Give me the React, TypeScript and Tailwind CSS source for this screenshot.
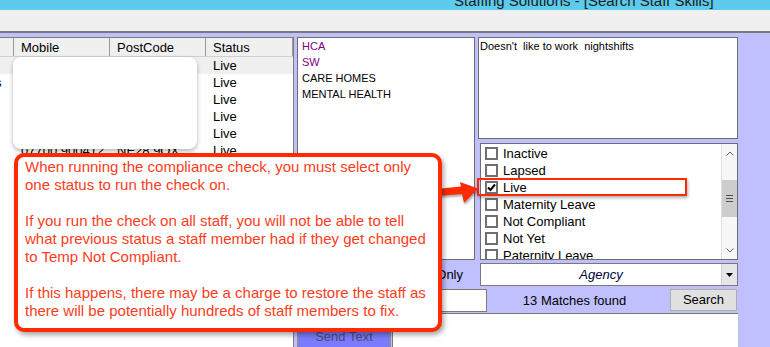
import React from "react";

const rows = [
  { lead: "", mobile: "", post: "", status: "Live" },
  { lead: "s", mobile: "", post: "", status: "Live" },
  { lead: "", mobile: "", post: "", status: "Live" },
  { lead: "", mobile: "", post: "", status: "Live" },
  { lead: "", mobile: "", post: "", status: "Live" },
  { lead: "", mobile: "07700 900412", post: "NE28 9QX", status: "Live" },
];

const skills = [
  { label: "HCA", purple: true },
  { label: "SW", purple: true },
  { label: "CARE HOMES", purple: false },
  { label: "MENTAL HEALTH", purple: false },
];

const statuses = [
  "Inactive",
  "Lapsed",
  "Live",
  "Maternity Leave",
  "Not Compliant",
  "Not Yet",
  "Paternity Leave",
];

function Checkbox({ checked }: { checked: boolean }) {
  return (
    <span className="flex h-[13px] w-[13px] shrink-0 items-center justify-center border-2 border-[#707070] bg-white">
      {checked && (
        <svg viewBox="0 0 9 9" className="h-[9px] w-[9px]">
          <path d="M1 4.5 L3.5 7 L8 1.5" fill="none" stroke="#000" strokeWidth="2" />
        </svg>
      )}
    </span>
  );
}

export default function App() {
  return (
    <div className="relative h-[347px] w-[770px] overflow-hidden bg-[#c0c0ff] font-['Liberation_Sans',Arial,sans-serif] text-[13px] text-black">
      {/* title bar */}
      <div className="h-[10px] overflow-hidden bg-[#5ccbec]">
        <div className="ml-[454px] mt-[-7px] whitespace-nowrap text-[15px] leading-[15px] text-[#1a1a1a]">
          Staffing Solutions - [Search Staff Skills]
        </div>
      </div>
      <div className="h-[21px] bg-[#f0f0f0]" />
      <div className="h-[2px] bg-[#7a7a7a]" />

      <div className="flex h-[314px] pt-[4px]">
        {/* results grid */}
        <div className="w-[294px] shrink-0 border-r border-t border-[#7d7d7d] bg-white">
          <div className="flex h-[19px] border-b border-[#d0d0d0] bg-[#f0f0f0] leading-[19px]">
            <div className="w-[14px] border-r border-[#9a9a9a]" />
            <div className="w-[96px] border-r border-[#9a9a9a] pl-[7px]">Mobile</div>
            <div className="w-[96px] border-r border-[#9a9a9a] pl-[7px]">PostCode</div>
            <div className="flex-1 border-r border-[#9a9a9a] pl-[7px]">Status</div>
          </div>
          {rows.map((r, i) => (
            <div
              key={i}
              className={`flex h-[17px] leading-[17px] ${i === 0 ? "bg-[#f0f0f0]" : ""}`}
            >
              <div className="w-[14px] overflow-hidden">
                <span className="ml-[-5px] block">{r.lead}</span>
              </div>
              <div className="w-[96px] whitespace-nowrap pl-[7px]">{r.mobile}</div>
              <div className="w-[96px] whitespace-nowrap pl-[7px]">{r.post}</div>
              <div className="flex-1 pl-[7px]">{r.status}</div>
            </div>
          ))}
        </div>

        <div className="ml-[3px] flex w-[441px] shrink-0 flex-col">
          <div className="flex h-[223px] gap-[3px]">
            {/* skills */}
            <div className="w-[178px] border border-[#6e6e6e] bg-white pl-[4px] text-[11px] leading-[16px]">
              {skills.map((s) => (
                <div key={s.label} className={s.purple ? "text-[#800080]" : "text-black"}>
                  {s.label}
                </div>
              ))}
            </div>

            <div className="flex w-[260px] flex-col gap-[4px]">
              {/* notes */}
              <div className="h-[102px] whitespace-pre border border-[#6e6e6e] bg-white pl-[1px] text-[11px] leading-[16px]">
                {"Doesn't  like to work  nightshifts"}
              </div>
              {/* status list */}
              <div className="ml-[2px] flex h-[117px] border border-[#6e6e6e] bg-white">
                <div className="flex-1 overflow-hidden pl-[4px] pt-[1px]">
                  {statuses.map((s) => (
                    <div key={s} className="flex h-[17px] items-center gap-[5px] leading-[17px]">
                      <Checkbox checked={s === "Live"} />
                      <span className="whitespace-nowrap">{s}</span>
                    </div>
                  ))}
                </div>
                <div className="flex w-[16px] flex-col border-l border-[#e0e0e0] bg-[#f7f7f7]">
                  <div className="flex h-[18px] items-center justify-center">
                    <svg viewBox="0 0 8 5" className="h-[5px] w-[8px]">
                      <path d="M0.5 4.5 L4 1 L7.5 4.5" fill="none" stroke="#606060" strokeWidth="1" />
                    </svg>
                  </div>
                  <div className="mt-[18px] flex h-[37px] items-center justify-center bg-[#cdcdcd]">
                    <div className="flex w-[7px] flex-col gap-[2px]">
                      <div className="h-px bg-[#505050]" />
                      <div className="h-px bg-[#505050]" />
                      <div className="h-px bg-[#505050]" />
                    </div>
                  </div>
                  <div className="flex-1" />
                  <div className="flex h-[18px] items-center justify-center">
                    <svg viewBox="0 0 8 5" className="h-[5px] w-[8px]">
                      <path d="M0.5 0.5 L4 4 L7.5 0.5" fill="none" stroke="#606060" strokeWidth="1" />
                    </svg>
                  </div>
                </div>
              </div>
            </div>
          </div>

          {/* agency row */}
          <div className="mt-[3px] flex h-[23px]">
            <div className="w-[183px] pr-[17px] text-right leading-[23px]">Agency Only</div>
            <div className="flex w-[258px] border border-[#7a7a7a] bg-white">
              <div className="flex-1 text-center italic leading-[21px] text-[#00003a]">Agency</div>
              <div className="flex w-[16px] items-center justify-center border-l border-[#d0d0d0] bg-[#e6e6e6]">
                <svg viewBox="0 0 7 4" className="h-[4px] w-[7px]">
                  <path d="M0 0 L7 0 L3.5 4 Z" fill="#000" />
                </svg>
              </div>
            </div>
          </div>

          {/* search row */}
          <div className="mt-[3px] flex h-[23px]">
            <div className="ml-[95px] w-[95px] border border-[#7a7a7a] bg-white" />
            <div className="w-[183px] pr-[8px] text-center leading-[23px]">13 Matches found</div>
            <button className="h-[22px] w-[67px] border border-[#adadad] bg-[#e1e1e1] leading-[20px]">
              Search
            </button>
          </div>

          {/* bottom */}
          <div className="mt-[1px] flex flex-1">
            <div className="w-[95px] pl-[0px] pt-[9px]">
              <div className="h-[30px] w-[94px] border-2 border-[#8a8aa8] bg-[#7b7bff] p-[2px]">
                <div className="text-center leading-[22px] text-[#4a4a7a]">Send Text</div>
              </div>
            </div>
            <div className="w-[346px] border-l border-t border-[#7a7a7a] bg-white" />
          </div>
        </div>
      </div>

      {/* redaction box over personal data */}
      <div className="absolute left-[13px] top-[57px] h-[92px] w-[184px] rounded-[8px] bg-white shadow-[0_2px_4px_rgba(0,0,0,0.3)]" />

      {/* highlight around Live */}
      <div className="absolute left-[477px] top-[178px] h-[18px] w-[210px] border-2 border-[#ff2a00] shadow-[1px_2px_3px_rgba(0,0,0,0.3)]" />

      {/* arrow */}
      <svg
        className="absolute left-[434px] top-[178px] h-[30px] w-[48px] drop-shadow-[1px_2px_1px_rgba(0,0,0,0.35)]"
        viewBox="0 0 48 30"
      >
        <polygon points="2,11 27,8.5 26,4 44,10.5 30,25 28,16 2,18" fill="#ff2a00" />
      </svg>

      {/* callout */}
      <div className="absolute left-[14px] top-[153px] h-[179px] w-[428px] rounded-[10px] border-[4px] border-[#ff2a00] bg-white pl-[7px] pt-[1px] text-[15px] leading-[18px] text-[#fc3d21] shadow-[2px_3px_5px_rgba(0,0,0,0.35)]">
        <div className="whitespace-nowrap">When running the compliance check, you must select only</div>
        <div className="whitespace-nowrap">one status to run the check on.</div>
        <div className="h-[18px]" />
        <div className="whitespace-nowrap">If you run the check on all staff, you will not be able to tell</div>
        <div className="whitespace-nowrap">what previous status a staff member had if they get changed</div>
        <div className="whitespace-nowrap">to Temp Not Compliant.</div>
        <div className="h-[18px]" />
        <div className="whitespace-nowrap">If this happens, there may be a charge to restore the staff as</div>
        <div className="whitespace-nowrap">there will be potentially hundreds of staff members to fix.</div>
      </div>
    </div>
  );
}
